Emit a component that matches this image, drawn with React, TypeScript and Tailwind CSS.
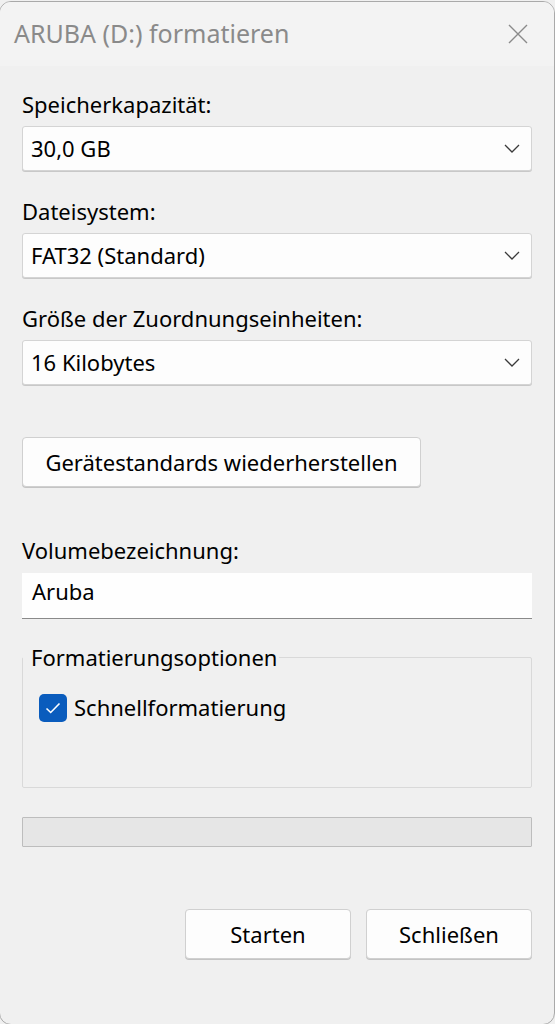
import React from "react";

const font = { fontFamily: '"Segoe UI", "Noto Sans", "Open Sans", sans-serif' };

const Chevron = () => (
  <svg width="16" height="9" viewBox="0 0 16 9" fill="none" className="shrink-0">
    <path d="M1 1l7 7 7-7" stroke="#3a3a3a" strokeWidth="1.3" />
  </svg>
);

const Select = ({ value }: { value: string }) => (
  <div className="flex h-[45px] items-center justify-between rounded-[3px] border border-[#d4d4d4] bg-[#fdfdfd] pl-[8px] pr-[11px] shadow-[0_1px_0_#c8c8c8]">
    <span>{value}</span>
    <Chevron />
  </div>
);

const Field = ({ label, value }: { label: string; value: string }) => (
  <div className="flex flex-col">
    <div className="h-[40px] pt-[3px] leading-[30px]">{label}</div>
    <Select value={value} />
  </div>
);

const PushButton = ({ children, className }: { children: React.ReactNode; className?: string }) => (
  <div
    className={
      "flex h-[50px] items-center justify-center rounded-[4px] border border-[#d0d0d0] bg-[#fdfdfd] shadow-[0_1px_0_#c4c4c4] " +
      (className ?? "")
    }
  >
    {children}
  </div>
);

export default function App() {
  return (
    <div className="h-[1024px] w-[555px] overflow-hidden bg-[#f0f0f0]" style={font}>
      <div className="ml-[-1px] mt-[1px] flex h-[1024px] w-[556px] flex-col overflow-hidden rounded-[12px] border border-[#a9a9a9] bg-[#f0f0f0] text-[22px] text-black">
        {/* title bar */}
        <div className="flex h-[64px] shrink-0 items-center justify-between bg-[#f3f3f3] pl-[14px] pr-[26px]">
          <span className="text-[25px] text-[#8a8a8a]">ARUBA (D:) formatieren</span>
          <svg width="20" height="20" viewBox="0 0 20 20" fill="none">
            <path d="M1 1l18 18M19 1L1 19" stroke="#8a8a8a" strokeWidth="1.4" />
          </svg>
        </div>

        <div className="flex flex-col pl-[22px] pr-[22px] pt-[20px]">
          <div className="flex flex-col gap-[22px]">
            <Field label="Speicherkapazität:" value="30,0 GB" />
            <Field label="Dateisystem:" value="FAT32 (Standard)" />
            <Field label="Größe der Zuordnungseinheiten:" value="16 Kilobytes" />
          </div>

          <PushButton className="mt-[52px] w-[399px]">Gerätestandards wiederherstellen</PushButton>

          <div className="mt-[48px] h-[38px] leading-[30px]">Volumebezeichnung:</div>
          <div className="flex h-[46px] items-center border-b-[1.5px] border-b-[#8a8a8a] bg-[#fefefe] pb-[8px] pl-[10px]">Aruba</div>

          {/* group box */}
          <div className="mt-[24px] flex flex-col">
            <div className="h-[14px]" />
            <div className="flex h-[131px] flex-col rounded-[2px] border border-[#d9d9d9] px-[16px]">
              <div className="-mt-[16px] w-fit bg-[#f0f0f0] pl-[8px] pr-[2px] leading-[30px]" style={{ marginLeft: -16 }}>
                Formatierungsoptionen
              </div>
              <div className="mt-[19px] flex items-center gap-[7px]">
                <div className="flex h-[28px] w-[28px] items-center justify-center rounded-[5px] bg-[#0a5cbd]">
                  <svg width="16" height="12" viewBox="0 0 16 12" fill="none">
                    <path d="M1.5 6.5l4.2 4 8.8-9" stroke="white" strokeWidth="1.6" />
                  </svg>
                </div>
                <span>Schnellformatierung</span>
              </div>
            </div>
          </div>

          {/* progress */}
          <div className="mt-[29px] h-[30px] rounded-[1px] border border-[#bdbdbd] bg-[#e6e6e6]" />

          <div className="mt-[62px] flex justify-end gap-[15px]">
            <PushButton className="w-[166px]">Starten</PushButton>
            <PushButton className="w-[166px]">Schließen</PushButton>
          </div>
        </div>
      </div>
    </div>
  );
}
